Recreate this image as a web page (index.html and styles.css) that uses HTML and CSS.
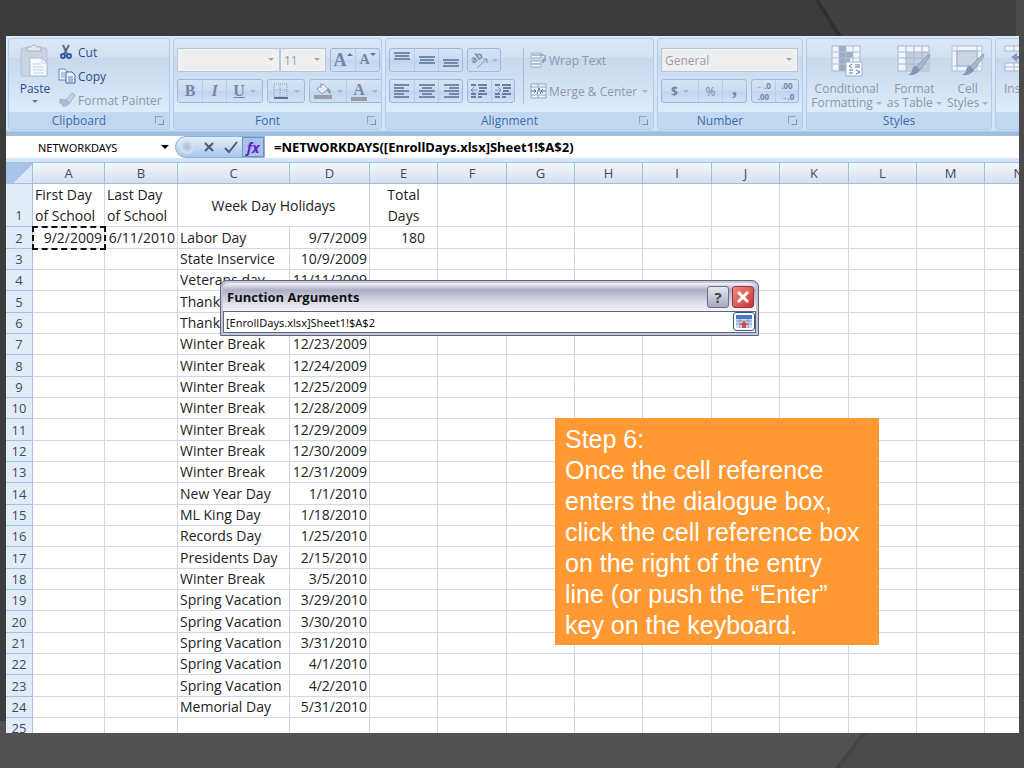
FILE: index.html
```
<!DOCTYPE html>
<html lang="en">
<head>
    <meta charset="UTF-8">
    <meta name="viewport" content="width=device-width, initial-scale=1.0">
    <title>NETWORKDAYS - Step 6</title>
    <link rel="stylesheet" href="styles.css">
</head>
<body>
    <!-- Slide background -->
    <svg class="backdrop" viewBox="0 0 1024 768" preserveAspectRatio="none" aria-hidden="true">
        <rect width="1024" height="768" fill="#3c3c3c"/>
        <path d="M818 0H1024V40H845Z" fill="#414141"/>
        <path d="M817 0L842 40" stroke="#303030" stroke-width="4"/>
        <path d="M0 721H1024V768H0Z" fill="#515151"/>
        <path d="M1016 0H1024V768H838L870 728H1016Z" fill="#4a4a4a"/>
        <path d="M868 728L836 770" stroke="#444" stroke-width="4"/>
    </svg>

    <main class="workbook">
        <!-- Ribbon -->
        <div class="ribbon">
            <section class="group clipboard">
                <div class="group-body">
                    <button class="big paste">
                        <svg width="32" height="34" viewBox="0 0 32 34">
                            <rect x="2" y="4" width="26" height="28" rx="2" fill="#c9d3e2" stroke="#b3c1d4"/>
                            <path d="M8 7V3h4q3-4 6 0h4v4z" fill="#e4e9f0" stroke="#a5b2c4"/>
                            <path d="M11 14h12l5 5v13H11z" fill="#f7faff" stroke="#a9bbd8"/>
                            <path d="M23 14v5h5M14 20h8M14 23h11M14 26h11M14 29h11" fill="none" stroke="#c0cde2"/>
                        </svg>
                        <span>Paste</span>
                        <i class="arrow"></i>
                    </button>
                    <div class="stack">
                        <button class="item cut">
                            <svg width="16" height="16" viewBox="0 0 16 16">
                                <path d="M5 1l4 9M11 1L6 10" stroke="#5d6f88" stroke-width="2"/>
                                <circle cx="5" cy="12" r="2" fill="none" stroke="#3058a8" stroke-width="2"/>
                                <circle cx="11" cy="12" r="2" fill="none" stroke="#3058a8" stroke-width="2"/>
                            </svg>
                            Cut
                        </button>
                        <button class="item">
                            <svg width="18" height="16" viewBox="0 0 18 16">
                                <path d="M1 1h6l3 3v8H1z" fill="#eaf2fd" stroke="#6888bd"/>
                                <path d="M3 5h4M3 7h4M3 9h4" stroke="#7d9bd0"/>
                                <path d="M8 4h6l3 3v8H8z" fill="#eef5ff" stroke="#3c62a8"/>
                                <path d="M10 9h5M10 11h5M10 13h5" stroke="#5b80c4"/>
                            </svg>
                            Copy
                        </button>
                        <button class="item muted">
                            <svg width="18" height="16" viewBox="0 0 18 16">
                                <path d="M14 1l3 2-5 8-4-3z" fill="#c5d2e6" stroke="#9fb2ce"/>
                                <path d="M2 6q4 2 6 1l4 4q-2 4-7 4-1-3-4-4z" fill="#a8b9d2"/>
                            </svg>
                            Format Painter
                        </button>
                    </div>
                </div>
                <h2 class="group-label">Clipboard<i class="launcher"></i></h2>
            </section>

            <section class="group font">
                <div class="group-body rows">
                    <div class="tools">
                        <div class="combos">
                            <span class="combo font-name"><select aria-label="Font"><option></option></select></span>
                            <span class="combo font-size"><select aria-label="Font size"><option>11</option></select></span>
                        </div>
                        <div class="btn-group">
                            <button class="serif grow" aria-label="Grow font">A<i class="arrow up"></i></button>
                            <button class="serif shrink" aria-label="Shrink font">A<i class="arrow"></i></button>
                        </div>
                    </div>
                    <div class="tools">
                        <div class="btn-group">
                            <button class="serif">B</button>
                            <button class="serif italic">I</button>
                            <button class="serif drop"><u>U</u><i class="arrow pale"></i></button>
                        </div>
                        <div class="btn-group">
                            <button class="drop" aria-label="Borders">
                                <svg width="16" height="16" viewBox="0 0 16 16">
                                    <path d="M1 1h13v13H1zM7 1v13M1 7h13" fill="none" stroke="#8fa0bb" stroke-dasharray="1 1"/>
                                    <path d="M1 15h14" stroke="#5c6f94" stroke-width="2"/>
                                </svg>
                                <i class="arrow pale"></i>
                            </button>
                        </div>
                        <div class="btn-group">
                            <button class="drop" aria-label="Fill color">
                                <svg width="18" height="18" viewBox="0 0 18 18">
                                    <path d="M3 7l6-5 5 5-6 5z" fill="#e6edf8" stroke="#8c9dba"/>
                                    <path d="M7 1v5M14 6q3 2 2 6l-3-4z" fill="#8c9dba" stroke="#8c9dba"/>
                                    <rect y="13" width="18" height="4" fill="#9a9ca3"/>
                                </svg>
                                <i class="arrow pale"></i>
                            </button>
                            <button class="serif drop" aria-label="Font color"><span class="font-color">A</span><i class="arrow pale"></i></button>
                        </div>
                    </div>
                </div>
                <h2 class="group-label">Font<i class="launcher"></i></h2>
            </section>

            <section class="group alignment">
                <div class="group-body">
                    <div class="rows">
                        <div class="tools">
                            <div class="btn-group">
                                <button aria-label="Top align"><svg width="16" height="16"><path d="M0 1h16M1 4h14M0 7h16" stroke="#7688aa" stroke-width="2"/></svg></button>
                                <button aria-label="Middle align"><svg width="16" height="16"><path d="M0 5h16M1 8h14M0 11h16" stroke="#7688aa" stroke-width="2"/></svg></button>
                                <button aria-label="Bottom align"><svg width="16" height="16"><path d="M0 8h16M1 11h14M0 14h16" stroke="#7688aa" stroke-width="2"/></svg></button>
                            </div>
                            <div class="btn-group">
                                <button class="drop orientation" aria-label="Orientation">
                                    <svg width="18" height="18" viewBox="0 0 18 18">
                                        <text x="0" y="10" font-size="10" font-weight="bold" fill="#7b8ba8" transform="rotate(-35 6 8)">ab</text>
                                        <path d="M6 17L16 8M12 8h4v4" fill="none" stroke="#8795ae"/>
                                    </svg>
                                    <i class="arrow pale"></i>
                                </button>
                            </div>
                        </div>
                        <div class="tools">
                            <div class="btn-group">
                                <button aria-label="Align left"><svg width="16" height="14"><path d="M0 1h15M0 4h10M0 7h15M0 10h10M0 13h15" stroke="#7688aa" stroke-width="2"/></svg></button>
                                <button aria-label="Center"><svg width="16" height="14"><path d="M0 1h16M3 4h10M0 7h16M3 10h10M0 13h16" stroke="#7688aa" stroke-width="2"/></svg></button>
                                <button aria-label="Align right"><svg width="16" height="14"><path d="M1 1h15M6 4h10M1 7h15M6 10h10M1 13h15" stroke="#7688aa" stroke-width="2"/></svg></button>
                            </div>
                            <div class="btn-group narrow">
                                <button aria-label="Decrease indent"><svg width="17" height="14"><path d="M0 1h5M7 1h9M8 4h8M8 7h6M0 10h5M7 10h9M0 13h5M7 13h4" stroke="#6c7ea2" stroke-width="2"/><path d="M6 6H1M3 3L0 6l3 3" fill="none" stroke="#7d94c4"/></svg></button>
                                <button aria-label="Increase indent"><svg width="17" height="14"><path d="M0 1h5M7 1h9M8 4h8M8 7h6M0 10h5M7 10h9M0 13h5M7 13h4" stroke="#6c7ea2" stroke-width="2"/><path d="M0 6h6M3 3l3 3-3 3" fill="none" stroke="#7d94c4"/></svg></button>
                            </div>
                        </div>
                    </div>
                    <div class="rows wrap-tools">
                        <button class="item muted">
                            <svg width="17" height="16" viewBox="0 0 17 16">
                                <path d="M1 1h10v5H1zM1 9h10v6H1z" fill="#edf3fc" stroke="#9aabca"/>
                                <path d="M2 3h12M2 12h8M15 3v6h-3M14 7l-2 2 2 2" fill="none" stroke="#6f86b1"/>
                            </svg>
                            Wrap Text
                        </button>
                        <button class="item muted">
                            <svg width="17" height="16" viewBox="0 0 17 16">
                                <path d="M1 1h15v14H1zM8 1v3M8 12v3M1 4h15M1 12h15" fill="#edf3fc" stroke="#93a5c5"/>
                                <path d="M1 8h4M12 8h4M7 11l2-6 2 6M4 6l2 2-2 2M13 6l-2 2 2 2" fill="none" stroke="#5e7095"/>
                            </svg>
                            Merge &amp; Center <i class="arrow pale"></i>
                        </button>
                    </div>
                </div>
                <h2 class="group-label">Alignment<i class="launcher"></i></h2>
            </section>

            <section class="group number">
                <div class="group-body rows">
                    <span class="combo"><select aria-label="Number format"><option>General</option></select></span>
                    <div class="tools">
                        <div class="btn-group">
                            <button class="drop currency">$<i class="arrow pale"></i></button>
                            <button>%</button>
                            <button class="serif comma">,</button>
                        </div>
                        <div class="btn-group narrow decimals">
                            <button aria-label="Increase decimal">←.0<br>.00</button>
                            <button aria-label="Decrease decimal">.00<br>→.0</button>
                        </div>
                    </div>
                </div>
                <h2 class="group-label">Number<i class="launcher"></i></h2>
            </section>

            <section class="group styles">
                <div class="group-body">
                    <button class="big muted">
                        <svg width="32" height="32" viewBox="0 0 32 32">
                            <path d="M1 1h28v25H1z" fill="#f0f4fb" stroke="#a9b7cf"/>
                            <path d="M8 1h7v25H8zM15 7h7v6h-7zM15 13h4v6h-4z" fill="#9dabc5"/>
                            <path d="M1 7h28M1 13h28M1 19h28M8 1v25M15 1v25M22 1v25" stroke="#b3c0d6"/>
                            <path d="M15 17h16v14H15z" fill="#f6f9fe" stroke="#9fb0cb"/>
                            <path d="M21 19l-3 2 3 2M18 25h4M18 28h4M24 20h5M24 22h5M25 25l4 2-4 2" fill="none" stroke="#66789b"/>
                        </svg>
                        <span>Conditional<br>Formatting <i class="arrow pale"></i></span>
                    </button>
                    <button class="big muted">
                        <svg width="34" height="32" viewBox="0 0 34 32">
                            <path d="M1 1h31v25H1z" fill="#f0f4fb" stroke="#a9b7cf"/>
                            <path d="M9 7h23v19H9z" fill="#c3cde0"/>
                            <path d="M1 7h31M1 13h31M1 19h31M9 1v25M17 1v25M25 1v25" stroke="#a9b7cf"/>
                            <path d="M32 9l1 2-10 14-4-3z" fill="#aab8d0" stroke="#8d9dba"/>
                            <path d="M19 21l4 4q-3 6-12 5 4-2 4-5 1-4 4-4z" fill="#8596b4"/>
                        </svg>
                        <span>Format<br>as Table <i class="arrow pale"></i></span>
                    </button>
                    <button class="big muted">
                        <svg width="34" height="32" viewBox="0 0 34 32">
                            <path d="M1 1h30v25H1z" fill="#f0f4fb" stroke="#b3c0d6"/>
                            <path d="M6 1v25M26 1v25M1 6h30M1 21h30" stroke="#b3c0d6"/>
                            <path d="M6 6h20v15H6z" fill="#ccd3e1" stroke="#9dabc5"/>
                            <path d="M32 9l1 2-10 14-4-3z" fill="#aab8d0" stroke="#8d9dba"/>
                            <path d="M19 21l4 4q-3 6-12 5 4-2 4-5 1-4 4-4z" fill="#8596b4"/>
                        </svg>
                        <span>Cell<br>Styles <i class="arrow pale"></i></span>
                    </button>
                </div>
                <h2 class="group-label">Styles</h2>
            </section>

            <section class="group cells">
                <div class="group-body">
                    <button class="big muted">
                        <svg width="32" height="32" viewBox="0 0 32 32">
                            <path d="M1 1h30v5H1zM1 18h30v8H1z" fill="#f0f4fb" stroke="#a9b7cf"/>
                            <path d="M10 1v5M20 1v5M10 18v8M20 18v8M1 22h30" stroke="#a9b7cf"/>
                            <path d="M7 12l6-4v3h8v3h-8v3z" fill="#8296bb"/>
                        </svg>
                        <span>Insert</span>
                    </button>
                </div>
                <h2 class="group-label"></h2>
            </section>
        </div>

        <!-- Formula bar -->
        <div class="formula-bar">
            <div class="name-box">
                <input type="text" aria-label="Name box" value="NETWORKDAYS">
                <i class="arrow black"></i>
            </div>
            <div class="formula-buttons">
                <span class="knob"></span>
                <button aria-label="Cancel"><svg width="12" height="12"><path d="M2 2l8 8M10 2l-8 8" stroke="#4c5b74" stroke-width="2"/></svg></button>
                <button aria-label="Enter"><svg width="14" height="12"><path d="M1 7l4 4 8-10" fill="none" stroke="#4c5b74" stroke-width="2"/></svg></button>
                <button class="fx" aria-label="Insert function"><i>fx</i></button>
            </div>
            <input class="formula" type="text" aria-label="Formula" value="=NETWORKDAYS([EnrollDays.xlsx]Sheet1!$A$2)">
        </div>

        <!-- Worksheet -->
        <div class="sheet">
            <table>
                <colgroup>
                    <col class="col-head"><col class="col-a"><col class="col-b"><col class="col-c"><col class="col-d">
                    <col class="col"><col class="col wide"><col class="col"><col class="col"><col class="col wide">
                    <col class="col"><col class="col wide"><col class="col"><col class="col"><col>
                </colgroup>
                <thead>
                    <tr id="columnHeads"></tr>
                </thead>
                <tbody id="sheetBody"></tbody>
            </table>
        </div>
    </main>

    <!-- Function Arguments window -->
    <div class="dialog" role="dialog" aria-labelledby="dialogTitle">
        <div class="title-bar">
            <h2 id="dialogTitle">Function Arguments</h2>
            <button class="help">?</button>
            <button class="close" aria-label="Close"><svg width="14" height="14"><path d="M2 2l10 10M12 2L2 12" stroke="#fff" stroke-width="3"/></svg></button>
        </div>
        <div class="argument">
            <input type="text" aria-label="Argument" value="[EnrollDays.xlsx]Sheet1!$A$2">
            <button class="expand" aria-label="Expand dialog">
                <svg width="16" height="13" viewBox="0 0 16 13">
                    <rect width="16" height="13" fill="#cfdcee"/>
                    <rect width="16" height="4" fill="#4a78cc"/>
                    <path d="M0 6h16M0 9h16M4 4v9M12 4v9" stroke="#7d99be"/>
                    <path d="M8 6l4 4h-2v3H6v-3H4z" fill="#d8483a"/>
                </svg>
            </button>
        </div>
    </div>

    <!-- Instruction -->
    <div class="callout">
        <p>Step 6:</p>
        <p>Once the cell reference<br>enters the dialogue box,<br>click the cell reference box<br>on the right of the entry<br>line (or push the “Enter”<br>key on the keyboard.</p>
    </div>

    <script>
        const columns = ['A', 'B', 'C', 'D', 'E', 'F', 'G', 'H', 'I', 'J', 'K', 'L', 'M', 'N'];
        const holidays = [
            ['Labor Day', '9/7/2009'],
            ['State Inservice', '10/9/2009'],
            ['Veterans day', '11/11/2009'],
            ['Thanksgiving', '11/26/2009'],
            ['Thanksgiving', '11/27/2009'],
            ['Winter Break', '12/23/2009'],
            ['Winter Break', '12/24/2009'],
            ['Winter Break', '12/25/2009'],
            ['Winter Break', '12/28/2009'],
            ['Winter Break', '12/29/2009'],
            ['Winter Break', '12/30/2009'],
            ['Winter Break', '12/31/2009'],
            ['New Year Day', '1/1/2010'],
            ['ML King Day', '1/18/2010'],
            ['Records Day', '1/25/2010'],
            ['Presidents Day', '2/15/2010'],
            ['Winter Break', '3/5/2010'],
            ['Spring Vacation', '3/29/2010'],
            ['Spring Vacation', '3/30/2010'],
            ['Spring Vacation', '3/31/2010'],
            ['Spring Vacation', '4/1/2010'],
            ['Spring Vacation', '4/2/2010'],
            ['Memorial Day', '5/31/2010'],
            ['', '']
        ];
        const blanks = '<td></td>'.repeat(9);

        // Column letters
        document.getElementById('columnHeads').innerHTML =
            '<th class="corner"></th>' + columns.map(name => `<th>${name}</th>`).join('');

        // Title row, then one row per holiday
        let rows = `
            <tr class="titles">
                <th>1</th>
                <td>First Day<br>of School</td>
                <td>Last Day<br>of School</td>
                <td class="center" colspan="2">Week Day Holidays</td>
                <td class="center">Total<br>Days</td>
                ${blanks}
            </tr>`;
        holidays.forEach((holiday, i) => {
            const first = i === 0;
            rows += `
                <tr>
                    <th>${i + 2}</th>
                    <td class="num${first ? ' selected' : ''}">${first ? '9/2/2009' : ''}</td>
                    <td class="num">${first ? '6/11/2010' : ''}</td>
                    <td>${holiday[0]}</td>
                    <td class="num">${holiday[1]}</td>
                    <td class="num total">${first ? '180' : ''}</td>
                    ${blanks}
                </tr>`;
        });
        document.getElementById('sheetBody').innerHTML = rows;
    </script>
</body>
</html>
```
FILE: styles.css
```
/* General */
* {
    box-sizing: border-box;
}

body {
    margin: 0;
    height: 100vh;
    padding: 36px 5px 35px 6px;
    overflow: hidden;
    position: relative;
    background: #3c3c3c;
    font-family: "Open Sans", "Noto Sans", sans-serif;
    font-size: 12px;
    color: #222;
}

h2, p {
    margin: 0;
    font-weight: normal;
}

button, input, select {
    font: inherit;
    color: inherit;
    border: none;
    background: none;
    padding: 0;
    margin: 0;
    min-width: 0;
}

.backdrop {
    position: absolute;
    inset: 0;
    width: 100%;
    height: 100%;
    z-index: -1;
}

.workbook {
    height: 100%;
    display: flex;
    flex-direction: column;
    overflow: hidden;
    background: #fff;
}

/* Ribbon */
.ribbon {
    display: flex;
    gap: 3px;
    height: 100px;
    padding: 2px 0 6px 2px;
    background: linear-gradient(#d9e9f9, #cfe5f8 94%, #9dbfdd 96%, #9dbfdd);
    overflow: hidden;
    color: #2c4b8c;
}

.group {
    flex: none;
    display: flex;
    flex-direction: column;
    border: 1px solid #b5cce8;
    border-radius: 3px;
    background: linear-gradient(#dbe7f5, #d3e1f2 20%, #c7d8ed 21%, #dcebfa 80%);
    overflow: hidden;
}

.clipboard { width: 162px; }
.font { width: 209px; }
.alignment { width: 269px; }
.number { width: 146px; }
.styles { width: 186px; }
.cells { width: 186px; }

.group-body {
    flex: 1;
    display: flex;
    min-height: 0;
    padding: 9px 3px 0;
}

.group-label {
    display: flex;
    align-items: center;
    justify-content: center;
    position: relative;
    height: 17px;
    padding-right: 20px;
    background: #c1d8f0;
    font-size: 12px;
    color: #3e6aaa;
}

.styles .group-label {
    padding-right: 0;
}

/* Corner mark that opens the group's own dialog */
.launcher {
    position: absolute;
    right: 6px;
    top: 4px;
    width: 8px;
    height: 8px;
    border: 1px solid #8ba6cb;
    border-right-color: transparent;
    border-bottom-color: transparent;
}

.launcher::after {
    content: "";
    display: block;
    width: 4px;
    height: 4px;
    margin: 2px;
    border: 1px solid #7792b8;
    border-top-color: transparent;
    border-left-color: transparent;
}

.rows {
    display: flex;
    flex-direction: column;
    gap: 7px;
}

.tools {
    display: flex;
    gap: 4px;
}

.muted {
    color: #8d97a8;
}

.arrow {
    display: inline-block;
    border: 3px solid transparent;
    border-top-color: #66799c;
    border-bottom: none;
}

.arrow.up {
    border: 3px solid transparent;
    border-bottom-color: #66799c;
    border-top: none;
}

.arrow.pale {
    border-top-color: #a9b4c6;
}

.big span .arrow {
    vertical-align: middle;
}

.arrow.black {
    border-width: 4px 4px 0;
    border-top-color: #000;
}

.btn-group {
    display: flex;
    height: 24px;
    border: 1px solid #9db9de;
    border-radius: 3px;
    background: linear-gradient(#d5e4f5, #cadcf1 50%, #bfd4ee 51%, #cfe1f5);
    color: #7485a6;
}

.btn-group button {
    width: 24px;
    display: flex;
    align-items: center;
    justify-content: center;
}

.btn-group button + button {
    border-left: 1px solid #b7cce7;
}

.btn-group .drop {
    width: 36px;
    gap: 5px;
}

.btn-group .orientation {
    width: 32px;
    gap: 3px;
}

.btn-group.narrow button {
    width: 23px;
}

.btn-group .serif {
    font-family: "Liberation Serif", serif;
    font-size: 16px;
    font-weight: bold;
}

.btn-group .italic {
    font-style: italic;
}

.btn-group .grow {
    font-size: 18px;
}

.btn-group .shrink {
    font-size: 14px;
}

.grow .arrow, .shrink .arrow {
    align-self: flex-start;
    margin-top: 4px;
}

.btn-group .comma {
    font-size: 20px;
    line-height: 12px;
    padding-bottom: 7px;
}

.font-color {
    line-height: 15px;
    border-bottom: 4px solid #9a9ca3;
    padding: 0 2px;
}

.combos {
    display: flex;
}

.combo {
    display: block;
    position: relative;
    height: 24px;
    border: 1px solid #b6c6dc;
    background: #efeff0;
    color: #9a9ca0;
}

.combo::after {
    content: "";
    position: absolute;
    right: 5px;
    top: 9px;
    border: 3px solid transparent;
    border-top-color: #a2a5aa;
    border-bottom: none;
}

.combo select {
    appearance: none;
    width: 100%;
    height: 100%;
    padding: 0 3px;
}

.font-name { width: 103px; }
.font-size { width: 46px; }

.big {
    display: flex;
    flex-direction: column;
    align-items: center;
    line-height: 14px;
    white-space: nowrap;
}

.paste {
    width: 46px;
    margin-top: -4px;
    gap: 4px;
}

.stack {
    display: flex;
    flex-direction: column;
    gap: 8px;
    margin-top: -4px;
}

.item {
    display: flex;
    align-items: center;
    gap: 2px;
    height: 16px;
    white-space: nowrap;
}

.cut {
    gap: 4px;
}

.item svg {
    flex: none;
}

.wrap-tools {
    margin-left: 8px;
    padding-left: 6px;
    border-left: 1px solid #a5bcdb;
    margin-bottom: 8px;
}

.wrap-tools .item {
    height: 24px;
}

.wrap-tools .arrow {
    margin-left: 3px;
}

.decimals {
    font-size: 8px;
    font-weight: bold;
    line-height: 11px;
}

.currency {
    font-weight: bold;
}

.number .combo {
    width: 137px;
}

.styles .group-body, .cells .group-body {
    padding-top: 6px;
    gap: 6px;
}

.styles .group-body {
    padding-left: 5px;
}

.styles .big, .cells .big {
    gap: 5px;
}

.cells .group-body {
    padding-left: 8px;
}

/* Formula bar */
.formula-bar {
    display: flex;
    align-items: center;
    flex: none;
    height: 26px;
    border-bottom: 4px solid #d3e5f7;
    background: #fff;
    color: #000;
}

.name-box {
    display: flex;
    align-items: center;
    width: 169px;
    padding: 0 6px 0 32px;
}

.name-box input {
    flex: 1;
    font-family: "Noto Sans", sans-serif;
    font-size: 11px;
}

.formula-buttons {
    display: flex;
    align-items: center;
    height: 22px;
    border: 1px solid #8eb0da;
    border-radius: 11px 0 0 11px;
    background: linear-gradient(#e5effb, #a9c6ea);
}

.formula-buttons button {
    width: 22px;
    height: 20px;
    display: flex;
    align-items: center;
    justify-content: center;
}

.knob {
    width: 14px;
    height: 14px;
    margin: 0 4px;
    border-radius: 50%;
    background: radial-gradient(#a9b9d0, #d5e0f0 60%);
}

.formula-buttons .fx {
    border: 1px solid #6f93c6;
    background: #a8c2ec;
    color: #6a1cc4;
    font-size: 14px;
    font-weight: bold;
}

.formula {
    flex: 1;
    padding-left: 9px;
    font-family: "Noto Sans", sans-serif;
    font-size: 13px;
    font-weight: bold;
}

/* Worksheet */
.sheet {
    flex: 1;
    min-height: 0;
    overflow: hidden;
}

table {
    width: 100%;
    min-width: 1047px;
    table-layout: fixed;
    border-collapse: separate;
    border-spacing: 0;
    font-size: 14px;
}

.col-head { width: 27px; }
.col-a { width: 72px; }
.col-b { width: 73px; }
.col-c { width: 112px; }
.col-d { width: 80px; }
.col { width: 68px; }
.col.wide { width: 69px; }

th, td {
    height: 21px;
    padding: 0 2px;
    border-right: 1px solid #d0d7e8;
    border-bottom: 1px solid #d0d7e8;
    line-height: 20px;
    text-align: left;
    white-space: nowrap;
}

th {
    font-size: 13px;
    font-weight: normal;
    text-align: center;
    color: #3f4a5a;
}

thead th {
    border-top: 1px solid #8fb0d8;
    border-color: #a5bedf;
    background: linear-gradient(#f3f7fc, #d3dfee);
}

thead .corner {
    background: linear-gradient(135deg, #a9c4e9 60%, #dbe8f8 61%);
}

tbody th {
    background: #e2ecf8;
    border-color: #a5bedf;
}

/* Every third row is a pixel taller */
tbody tr:nth-child(3n + 2) > * {
    height: 22px;
}

.titles > * {
    height: 43px;
    line-height: 21px;
}

.titles th {
    vertical-align: bottom;
}

.center {
    text-align: center;
}

.num {
    text-align: right;
}

.total {
    padding-right: 12px;
}

.selected {
    outline: 2px dashed #111;
    outline-offset: -1px;
}

/* Function Arguments window */
.dialog {
    position: absolute;
    left: 220px;
    top: 280px;
    width: 539px;
    padding: 2px;
    border: 1px solid #62647a;
    border-radius: 7px 7px 0 0;
    background: #c5c6d8;
    color: #111;
}

.title-bar {
    display: flex;
    align-items: center;
    gap: 3px;
    height: 28px;
    padding: 0 2px 0 4px;
    border-radius: 6px 6px 0 0;
    background: linear-gradient(#f5f5fa, #adaec4 25%, #dcdde8 70%, #f4f4f9);
}

.title-bar h2 {
    flex: 1;
    font-size: 13px;
    font-weight: bold;
}

.title-bar button {
    display: flex;
    align-items: center;
    justify-content: center;
    width: 22px;
    height: 22px;
    border: 1px solid #6b6d8a;
    border-radius: 3px;
}

.help {
    background: linear-gradient(#e6e7f0, #a7a9c2);
    font-size: 15px;
    font-weight: bold;
    color: #444;
}

.title-bar .close {
    border-color: #8e3540;
    background: linear-gradient(135deg, #ee8b80, #cc3532);
}

.argument {
    display: flex;
    height: 22px;
    border: 1px solid #62647a;
    background: #fff;
}

.argument input {
    flex: 1;
    padding-left: 2px;
    font-family: "Noto Sans", sans-serif;
    font-size: 11px;
}

.expand {
    display: flex;
    align-items: center;
    justify-content: center;
    width: 22px;
    height: 19px;
    border: 1px solid #31588c;
    border-radius: 3px;
    background: #fff;
}

/* Instruction note */
.callout {
    position: absolute;
    left: 555px;
    top: 418px;
    width: 324px;
    padding: 6px 8px 4px 10px;
    background: #ff9933;
    color: #fff;
    font-family: "Liberation Sans", Arial, sans-serif;
    font-size: 25px;
    line-height: 31px;
}
```
